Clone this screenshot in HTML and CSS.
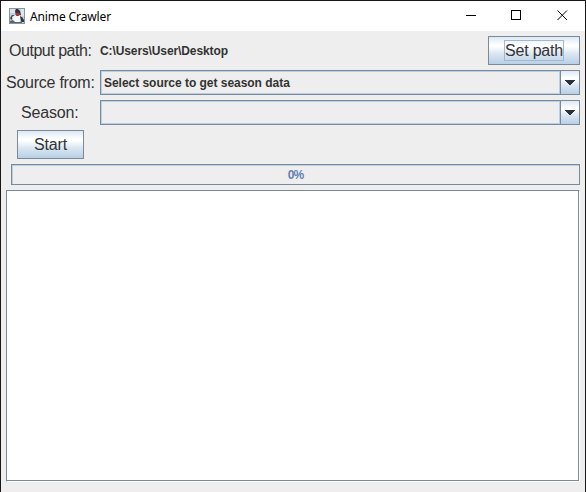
FILE: index.html
```html
<!DOCTYPE html>
<html lang="en">
<head>
<meta charset="utf-8">
<title>Anime Crawler</title>
<link rel="stylesheet" href="styles.css">
</head>
<body>
<div class="window">
  <header class="titlebar">
    <svg class="app-icon" width="16" height="16" viewBox="0 0 16 16">
      <rect width="16" height="16" fill="#8395a5"/>
      <rect x="1" y="1" width="14" height="14" fill="#c5d2dd"/>
      <path d="M1 1H6V5H1ZM12 1H15V8H12Z" fill="#dce5ed"/>
      <path d="M6 3L7 1H9L11 3L12 7L10 9L7 8Z" fill="#30333a"/>
      <path d="M1 10L3 7H6L5 10L2 12Z" fill="#44494f"/>
      <path d="M3 9L6 7L8 8L11 7L13 9L12 13L10 14H6L4 13Z" fill="#f7f8fa"/>
      <path d="M11 8L13 9L15 12V14H12Z" fill="#30353b"/>
      <path d="M1 13L4 12L6 14H11L13 13V15H1Z" fill="#5d656c"/>
      <ellipse cx="8.8" cy="6.3" rx="1.9" ry="1.7" fill="#b5323a"/>
    </svg>
    <span class="title">Anime Crawler</span>
    <svg class="controls" width="102" height="12" viewBox="0 0 102 12" shape-rendering="crispEdges">
      <path d="M0 5.5H10M45.500 .5H54.500V9.500H45.500Z" fill="none" stroke="#000"/>
      <path d="M91.500 .5L101 10M101 .5L91.500 10" fill="none" stroke="#000" shape-rendering="auto"/>
    </svg>
  </header>
  <main class="form">
    <div class="row row-path">
      <span class="label label-output">Output path:</span>
      <span class="path">C:\Users\User\Desktop</span>
      <button class="button button-path"><span class="focus">Set path</span></button>
    </div>
    <div class="row row-combo">
      <span class="label label-source">Source from:</span>
      <div class="combo"><div class="value"><span class="selected">Select source to get season data</span></div><div class="arrow"><svg width="10" height="5" viewBox="0 0 10 5" shape-rendering="crispEdges"><path d="M0 0H10V1H9V2H8V3H7V4H6V5H4V4H3V3H2V2H1V1H0Z" fill="#2d3338"/></svg></div></div>
    </div>
    <div class="row row-combo">
      <span class="label label-season">Season:</span>
      <div class="combo"><div class="value"></div><div class="arrow"><svg width="10" height="5" viewBox="0 0 10 5" shape-rendering="crispEdges"><path d="M0 0H10V1H9V2H8V3H7V4H6V5H4V4H3V3H2V2H1V1H0Z" fill="#2d3338"/></svg></div></div>
    </div>
    <button class="button button-start">Start</button>
    <div class="progress">0%</div>
    <div class="log"></div>
  </main>
</div>
</body>
</html>
```
FILE: styles.css
```css
* { box-sizing: border-box; }
body { margin: 0; overflow: hidden; font-family: "Liberation Sans", Arial, sans-serif; color: #333; }
.window { width: 586px; height: 492px; border: 1px solid #17171a; border-bottom: 0; background: #eee; }
.titlebar { height: 30px; display: flex; align-items: center; padding: 0 17px 0 8px; background: #fff; }
.app-icon { margin-top: -1px; }
.title { margin-left: 5px; font: 12px "Noto Sans", sans-serif; color: #000; letter-spacing: -.12px; }
.controls { margin-left: auto; }
.form { padding: 5px 5px 0; display: flex; flex-direction: column; }
.row { display: flex; }
.row-path { height: 29px; margin-bottom: 5px; align-items: center; }
.row-combo { height: 25px; margin-bottom: 5px; align-items: center; }
.label { width: 94px; flex: none; font-size: 16px; white-space: nowrap; line-height: 20px; }
.label-output { padding-left: 3px; letter-spacing: -.47px; }
.label-source { letter-spacing: -.25px; }
.label-season { padding-left: 15px; letter-spacing: -.15px; }
.path, .selected { font-size: 12px; font-weight: bold; white-space: nowrap; line-height: 16px; }
.path { letter-spacing: -.1px; }
.selected { letter-spacing: -.03px; }
.button { height: 29px; padding: 0; border: 1px solid #7a8a99; font: 16px/18px "Liberation Sans", Arial, sans-serif; color: #333; background: linear-gradient(#dde8f3 0%, #fff 30%, #fff 35%, #dde8f3 60%, #b8cfe5 100%); }
.button-path { width: 92px; margin-left: auto; display: flex; align-items: center; justify-content: center; }
.focus { width: 60px; height: 21px; border: 1px solid #a3b8cc; line-height: 19px; white-space: nowrap; letter-spacing: -.2px; text-align: left; }
.button-start { width: 67px; margin-left: 11px; letter-spacing: -.2px; }
.combo { flex: 1; height: 25px; display: flex; border: 1px solid #7a8a99; }
.value { flex: 1; border: 1px solid #b8cfe5; padding: 3px 2px; display: flex; align-items: center; }
.arrow { width: 19px; border-left: 1px solid #7a8a99; display: flex; align-items: center; justify-content: center; background: linear-gradient(#dde8f3 0%, #fff 30%, #fff 35%, #dde8f3 60%, #b8cfe5 100%); }
.progress { height: 21px; margin: 5px 0 5px 5px; border: 1px solid #7a8a99; box-shadow: inset 1px 1px #b8cfe5; font-size: 12px; font-weight: bold; line-height: 20px; text-align: center; color: #6382b3; letter-spacing: -.8px; }
.log { height: 292px; border: 1px solid #7a8a99; border-right-color: #fff; border-bottom-color: #fff; background: #fff; box-shadow: inset -1px -1px #7a8a99; }
```
